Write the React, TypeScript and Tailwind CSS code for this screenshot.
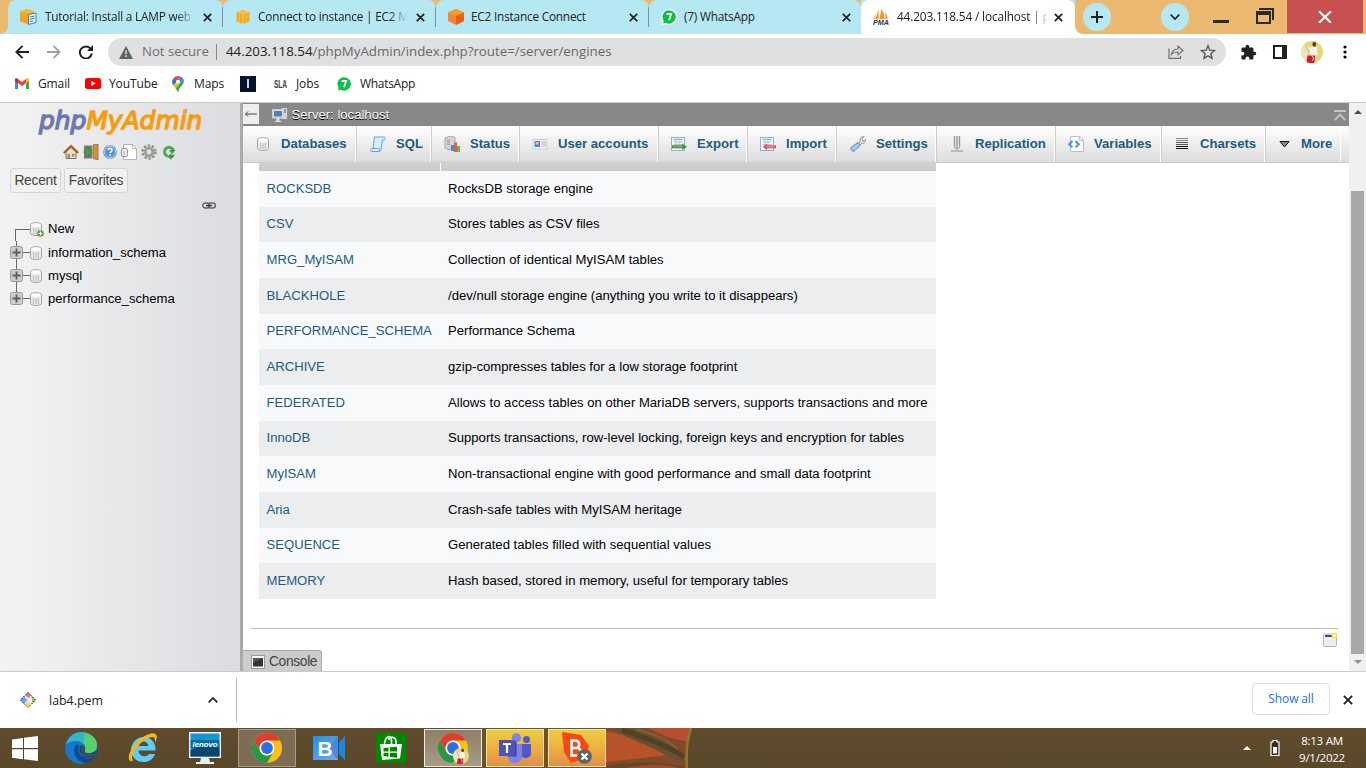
import React from "react";

const UI = "font-['Open_Sans','Noto_Sans',sans-serif]";
const ARIAL = "font-['Liberation_Sans',Arial,sans-serif]";

function Close({ className = "w-[9px] h-[9px]", color = "#202124" }: { className?: string; color?: string }) {
  return (
    <svg viewBox="0 0 9 9" className={className}>
      <path d="M.8.8l7.4 7.4M8.2.8L.8 8.2" stroke={color} strokeWidth="1.7" fill="none" />
    </svg>
  );
}

function WhatsApp({ className }: { className: string }) {
  return (
    <svg viewBox="0 0 16 16" className={className}>
      <path d="M8 0a8 8 0 1 1-3.400 15L.3 15.900l.9-4A8 8 0 0 1 8 0z" fill="#fff" />
      <path d="M8 1.200a6.700 6.700 0 1 1-3.200 12.500l-2.800.7.7-2.700A6.700 6.700 0 0 1 8 1.200z" fill="#0bc143" />
      <path d="M5.600 5h4.600L8 11.200" fill="none" stroke="#fff" strokeWidth="1.800" />
    </svg>
  );
}

const CubeYellow = () => (
  <svg viewBox="0 0 16 16" className="w-4 h-4">
    <path d="M8 1l6.500 2.300v9.200L8 15l-6.500-2.500V3.300z" fill="#f2a922" />
    <path d="M1.500 3.400L8 5.700l6.500-2.300L8 1z" fill="#f9bd42" />
    <path d="M8 5.700V15" stroke="#fbdc9b" strokeWidth=".8" />
    <path d="M4.500 2.200v12M11.500 2.200v12" stroke="#fbce74" strokeWidth=".5" />
  </svg>
);

const CubeDoc = () => (
  <svg viewBox="0 0 17 16" className="w-[17px] h-4">
    <path d="M7 0l7 2.300v10L7 15 0 12.500v-10z" fill="#f0a325" />
    <path d="M0 2.500L7 4.800l7-2.400L7 0z" fill="#f9b83c" />
    <path d="M8.500 5.500l7.500-1.500v9.500l-7.500 2z" fill="#e9f4fb" stroke="#3884b8" strokeWidth="1" />
    <path d="M10 8l4.500-1M10 10.300l4.500-1M10 12.600l3-.7" stroke="#3884b8" strokeWidth="1" />
  </svg>
);

const CubeOrange = () => (
  <svg viewBox="0 0 16 16" className="w-4 h-4">
    <path d="M8 0l8 3.500v8.500l-8 4-8-4V3.500z" fill="#f58536" />
    <path d="M0 3.500L8 7l8-3.500L8 0z" fill="#fd9a2e" />
    <path d="M8 7l8-3.500V12l-8 4z" fill="#ea5f1c" />
  </svg>
);

const PmaSails = () => (
  <svg viewBox="0 0 16 16" className="w-4 h-4">
    <path d="M5.500.5L2.500 10h3.300zM8.500 0L6.500 10h5c0-4-1-7-3-10zM12.200 3.500c1.600 2 2.300 4 2.600 6.500h-2.300zM3 5L.5 10H2z" fill="#f7941d" />
    <text x="0" y="15.500" fontSize="6.500" fontWeight="bold" fontStyle="italic" fill="#2e3260" textLength="16" lengthAdjust="spacingAndGlyphs" fontFamily="Liberation Sans">PMA</text>
  </svg>
);

function Tab({ icon, title, sep = true, width, gap = "ml-[6px]", fade }: { icon: React.ReactNode; title: string; sep?: boolean; width: string; gap?: string; fade?: boolean }) {
  return (
    <div className={`${width} relative h-[34px] flex items-center pl-3 bg-[#b5e8f3] rounded-t-[8px]`}>
      <span className="w-[17px] shrink-0">{icon}</span>
      <span className={`${gap} w-[153px] whitespace-nowrap text-[11.8px] tracking-[-0.2px] text-[#202124] ${fade ? "[mask-image:linear-gradient(to_right,#000_86%,transparent_98%)]" : ""}`}>{title}</span>
      <span className="ml-[5px] flex"><Close /></span>
      {sep && <span className="absolute right-0 top-[7px] w-px h-5 bg-[#7c9298]" />}
    </div>
  );
}

function Browser() {
  return (
    <header className={UI}>
      <div className="flex h-[34px] bg-[#ebba70]">
        <div className="w-2 h-[34px] bg-[#b5e8f3]"><div className="w-2 h-[34px] bg-[#ebba70] rounded-br-[8px]" /></div>
        <div className="flex h-[34px]">
          <Tab icon={<CubeDoc />} title="Tutorial: Install a LAMP web s" width="w-[215px]" gap="ml-[8px]" fade />
          <Tab icon={<CubeYellow />} title="Connect to instance | EC2 M" width="w-[213px]" fade />
          <Tab icon={<CubeOrange />} title="EC2 Instance Connect" width="w-[213px]" />
          <Tab icon={<WhatsApp className="w-4 h-4" />} title="(7) WhatsApp" width="w-[212px]" gap="ml-[6px]" sep={false} />
        </div>
        <div className="h-[34px] w-[214px] bg-[#b5e8f3]">
          <div className="h-[34px] bg-white rounded-t-[8px] flex items-center pl-3">
            <PmaSails />
            <span className="ml-2 w-[150px] whitespace-nowrap text-[11.8px] tracking-[-0.13px] text-[#202124] [mask-image:linear-gradient(to_right,#000_88%,transparent_102%)]">44.203.118.54 / localhost | p</span>
            <span className="ml-[7px] flex"><Close /></span>
          </div>
        </div>
        <div className="w-2 bg-white"><div className="w-2 h-[34px] bg-[#ebba70] rounded-bl-[8px]" /></div>
        <div className="flex items-center flex-1">
          <span className="w-7 h-7 rounded-full bg-[#b5e8f3] grid place-items-center">
            <svg viewBox="0 0 12 12" className="w-3 h-3"><path d="M6 0v12M0 6h12" stroke="#202124" strokeWidth="2" /></svg>
          </span>
          <span className="ml-[50px] w-7 h-7 rounded-full bg-[#b5e8f3] grid place-items-center">
            <svg viewBox="0 0 10 6" className="w-[10px] h-[6px]"><path d="M.7.7L5 5 9.3.7" stroke="#202124" strokeWidth="1.7" fill="none" /></svg>
          </span>
          <span className="ml-6 mt-[9px] w-4 h-[3px] bg-[#2a2a2a]" />
          <svg viewBox="0 0 18 16" className="ml-[27px] w-[18px] h-4 -mt-[3px]">
            <path d="M3 1h14v11" fill="none" stroke="#2a2a2a" strokeWidth="2" />
            <path d="M0 3h15v13H0zM2 7v7h11V7z" fill="#2a2a2a" fillRule="evenodd" />
          </svg>
          <span className="ml-[13px] w-[76px] h-[33px] -mt-px bg-[#c75050] grid place-items-center">
            <svg viewBox="0 0 14 12" className="w-[14px] h-3"><path d="M1 .3L13 11.700M13 .3L1 11.700" stroke="#fff" strokeWidth="2.200" /></svg>
          </span>
        </div>
      </div>
      <div className="h-[36px] bg-white flex items-center">
        <svg viewBox="0 0 14 14" className="ml-[15px] w-[14px] h-[14px]"><path d="M14 7H1.800M7.500 .9L1.400 7l6.100 6.100" stroke="#202124" strokeWidth="1.900" fill="none" /></svg>
        <svg viewBox="0 0 14 14" className="ml-[18px] w-[14px] h-[14px]"><path d="M0 7h12.200M6.500 .9L12.600 7l-6.100 6.100" stroke="#a0a0a0" strokeWidth="1.800" fill="none" /></svg>
        <svg viewBox="0 0 14 14" className="ml-[18px] w-[14px] h-[14px]"><path d="M11.800 4A6 6 0 1 0 12.800 8.500" stroke="#202124" strokeWidth="2" fill="none" /><path d="M14 0v6H8z" fill="#202124" /></svg>
        <div className="ml-[15px] w-[1118px] h-7 rounded-full bg-[#e0e0e0] flex items-center pl-[11px]">
          <svg viewBox="0 0 14 13" className="w-[14px] h-[13px]"><path d="M7 0l7 13H0z" fill="#5f6368" /><path d="M6.200 4.500h1.600V8H6.200zM6.200 9.300h1.600v1.600H6.200z" fill="#e0e0e0" /></svg>
          <span className="ml-[9px] w-[68px] text-[13.2px] text-[#6b6e73] whitespace-nowrap">Not secure</span>
          <span className="ml-[6px] w-px h-4 bg-[#8a8a8a]" />
          <span className="ml-[9px] text-[13.3px] text-[#202124] whitespace-nowrap">44.203.118.54<span className="text-[#65686c]">/phpMyAdmin/index.php?route=/server/engines</span></span>
          <svg viewBox="0 0 16 14" className="ml-auto w-4 h-[14px]"><path d="M1 3.500v9.800h11.500V11" stroke="#6b6e73" strokeWidth="1.200" fill="none" /><path d="M3.500 9.500C4 6 6 4 10 4V1l5 4.500-5 4.300V7C7 7 5 7.600 3.500 9.500z" stroke="#6b6e73" strokeWidth="1.100" fill="none" /></svg>
          <svg viewBox="0 0 16 16" className="ml-4 mr-[10px] w-4 h-4"><path d="M8 1.800l1.800 4.400 4.700.4-3.600 3.100 1.100 4.600L8 11.800l-4 2.500 1.100-4.600L1.500 6.600l4.700-.4z" stroke="#55585c" strokeWidth="1.400" fill="none" /></svg>
        </div>
        <svg viewBox="0 0 24 24" className="ml-[14px] w-[17px] h-[17px]"><path d="M20.500 11H19V7a2 2 0 0 0-2-2h-4V3.500a2.500 2.500 0 0 0-5 0V5H4a2 2 0 0 0-2 2v3.800h1.500a2.700 2.700 0 0 1 0 5.400H2V20a2 2 0 0 0 2 2h3.800v-1.500a2.700 2.700 0 0 1 5.400 0V22H17a2 2 0 0 0 2-2v-4h1.500a2.500 2.500 0 0 0 0-5z" fill="#202124" /></svg>
        <svg viewBox="0 0 14 14" className="ml-4 w-[14px] h-[14px]"><path d="M0 0h14v14H0zM2 2v10h7V2z" fill="#202124" fillRule="evenodd" /></svg>
        <Avatar className="ml-[14px] w-[22px] h-[22px]" />
        <svg viewBox="0 0 4 14" className="ml-5 w-1 h-[14px]"><circle cx="2" cy="2" r="1.600" /><circle cx="2" cy="7" r="1.600" /><circle cx="2" cy="12" r="1.600" /></svg>
      </div>
      <div className="h-8 bg-white flex items-center text-[12px] tracking-[-0.12px] text-[#202124] pl-[15px] pb-[5px]">
        <svg viewBox="0 0 14 11" className="w-[14px] h-[11px]">
          <path d="M0 1v10h3V4z" fill="#4285f4" /><path d="M11 4v7h3V1z" fill="#34a853" /><path d="M0 1.500C0 0 2 0 3 1v4.500L0 3z" fill="#c5221f" /><path d="M3 1l4 3 4-3v4L7 8 3 5z" fill="#ea4335" /><path d="M11 1c1-1 3-1 3 .5V3l-3 2.500z" fill="#fbbc04" />
        </svg>
        <span className="ml-[9px] w-[47px]">Gmail</span>
        <svg viewBox="0 0 16 11" className="w-4 h-[11px]"><rect width="16" height="11" rx="2.500" fill="#f00" /><path d="M6.300 3v5L10.700 5.500z" fill="#fff" /></svg>
        <span className="ml-2 w-[62px]">YouTube</span>
        <svg viewBox="0 0 12 16" className="ml-[1px] w-3 h-4">
          <path d="M6 0a6 6 0 0 0-5 2.700L4 5.500 8.500.6A6 6 0 0 0 6 0z" fill="#ea4335" /><path d="M8.500.6L4 5.600l3 3 4.700-5A6 6 0 0 0 8.500.6z" fill="#4285f4" /><path d="M1 2.700C-.5 5 0 7.500 1.300 9.500L5 5.500z" fill="#1a73e8" /><path d="M1.300 9.500L5 5.500l2.500 2.500-4 4.500z" fill="#fbbc04" /><path d="M11.700 3.500C13 8.500 7.500 10 6.500 15.500c-.2.700-.8.700-1 0-.4-1.300-1-2-2-3.300z" fill="#34a853" /><circle cx="6" cy="5.800" r="2" fill="#fff" />
        </svg>
        <span className="ml-[10px] w-[46px]">Maps</span>
        <span className="w-4 h-4 bg-[#05122d] grid place-items-center"><span className="w-[2px] h-[9px] bg-[#cbd0da]" /></span>
        <svg viewBox="0 0 13 14" className="ml-[18px] w-[13px] h-[14px] overflow-visible"><text x="0" y="11" fontSize="11" fontWeight="bold" fill="#444" textLength="13" lengthAdjust="spacingAndGlyphs" fontFamily="Liberation Sans">SLA</text></svg>
        <span className="ml-[9px] w-[40px]">Jobs</span>
        <WhatsApp className="w-4 h-4" />
        <span className="ml-2 tracking-[-0.3px]">WhatsApp</span>
      </div>
      <div className="h-px bg-[#c9cacc]" />
    </header>
  );
}

function Avatar({ className }: { className: string }) {
  return (
    <svg viewBox="0 0 22 22" className={className}>
      <circle cx="11" cy="11" r="11" fill="#e3d97c" />
      <path d="M3 4a11 11 0 0 0 4 17V9z" fill="#ece6c4" />
      <path d="M4.500 6l5 .5 2.500-1.500 4 1 .5 8-7 1-1-5z" fill="#f5eff2" />
      <path d="M4.500 6l4 5" stroke="#c79a7e" strokeWidth="1" />
      <ellipse cx="13.300" cy="3.200" rx="1.900" ry="2.500" fill="#5b3d30" />
      <path d="M6.500 14.500h7.500l-.5 7.200a11 11 0 0 1-8-.7z" fill="#cf1f2b" />
      <path d="M10 13l2.500 4-1 3" stroke="#f3c9c9" strokeWidth="1" fill="none" />
    </svg>
  );
}

function Cylinder({ plus, className = "w-3 h-[14px]" }: { plus?: boolean; className?: string }) {
  return (
    <svg viewBox="0 0 12 14" className={`${className} overflow-visible`}>
      <path d="M.5 2.800C.5.100 11.500.100 11.500 2.800v8.400c0 3-11 3-11 0z" fill="#ececec" stroke="#a3a3a3" />
      <ellipse cx="6" cy="3" rx="4.800" ry="1.700" fill="#fff" />
      <path d="M3.500 6v6M6 6.500V12M8.300 6v6" stroke="#c3c3c3" strokeWidth="1.300" />
      {plus && <><circle cx="10.500" cy="11.500" r="3.300" fill="#5a9a3c" /><path d="M10.500 9.500v4M8.500 11.500h4" stroke="#fff" strokeWidth="1.200" /></>}
    </svg>
  );
}

function TreeRow({ name, last }: { name: string; last?: boolean }) {
  return (
    <div className="flex h-[23px]">
      <div className="w-[13px] flex flex-col items-center">
        <span className="w-px flex-1 bg-[#666] -ml-px" />
        <svg viewBox="0 0 13 13" className="w-[13px] h-[13px] shrink-0"><rect x=".5" y=".5" width="12" height="12" rx="2" fill="#cdcdcd" stroke="#999" /><path d="M6.500 2.500v8M2.500 6.500h8" stroke="#5c5c5c" strokeWidth="1.800" /></svg>
        <span className={`w-px flex-1 -ml-px ${last ? "" : "bg-[#666]"}`} />
      </div>
      <div className="flex items-center">
        <span className="w-[7px] h-px bg-[#666]" />
        <Cylinder />
        <span className="ml-[6px] whitespace-nowrap">{name}</span>
      </div>
    </div>
  );
}

function Sidebar() {
  return (
    <aside className="w-[240px] h-[568px] bg-[linear-gradient(to_right,#f3f3f3,#dadce0)] flex flex-col text-[13.12px] text-black">
      <div className="h-[34px] mt-[1px] pl-[39px] font-['DejaVu_Sans',sans-serif] italic text-[24.9px] leading-[33px] whitespace-nowrap text-[#6c78af] [-webkit-text-stroke:1.4px_#6c78af]">
        php<span className="text-[#f89c0e] [-webkit-text-stroke:1.4px_#f89c0e]">MyAdmin</span>
      </div>
      <div className="flex items-center gap-1 ml-[63px] mt-[6px] h-4">
        <svg viewBox="0 0 16 16" className="w-4 h-4"><path d="M3 8v6.500h10V8L8 3.500z" fill="#e9dfc8" stroke="#8a7050" /><path d="M.7 9L8 2l7.300 7" stroke="#a0662a" strokeWidth="2" fill="none" /><path d="M4.500 10h2.500v4.500H4.500zM9 10h2.500v2.500H9z" fill="#868b91" /></svg>
        <svg viewBox="0 0 16 16" className="w-4 h-4"><path d="M1 1.500h8v13H1z" fill="#777" /><path d="M10 1l5-1v16l-5-1.500z" fill="#cf9348" stroke="#93591d" strokeWidth=".7" /><path d="M9 6v4H5.500v2.500L.5 8l5-4.500V6z" fill="#4ba241" stroke="#2e7d2a" strokeWidth=".5" /></svg>
        <svg viewBox="0 0 16 16" className="w-4 h-4 -ml-px"><circle cx="8" cy="8" r="6.800" fill="#5b8ed0" /><circle cx="8" cy="8" r="5.500" fill="none" stroke="#c2d7f1" strokeWidth=".9" /><path d="M6 6.300c0-2.500 4-2.500 4 0 0 1.500-2 1.500-2 3M8 10.500V12" stroke="#fff" strokeWidth="1.500" fill="none" /></svg>
        <svg viewBox="0 0 16 16" className="w-4 h-4 -ml-px"><path d="M2.500.5h9l4 4v11h-13z" fill="#fff" stroke="#b5b5b5" /><path d="M11.500.5v4h4" fill="none" stroke="#bbb" /><rect x=".5" y="4.500" width="6" height="8" rx="1.500" fill="#eee" stroke="#999" /><path d="M3 7v4" stroke="#aaa" /></svg>
        <svg viewBox="0 0 16 16" className="w-4 h-4"><circle cx="8" cy="8" r="6.500" fill="none" stroke="#8d8d8d" strokeWidth="2.400" strokeDasharray="2.300 1.784" /><circle cx="8" cy="8" r="3.900" fill="#e2e2e2" stroke="#9f9f9f" strokeWidth="3" /><circle cx="8" cy="8" r="2" fill="#e4e4e4" /></svg>
        <svg viewBox="0 0 16 16" className="w-4 h-4"><path d="M12.500 6.500A4.600 4.600 0 1 0 6.800 12.300" fill="none" stroke="#4fa64b" strokeWidth="3" /><path d="M8 6h6.500l-3.200 4z" fill="#3f9b3d" /><path d="M6.500 12.500l4-3.500v2.200c1.500 0 2.500-.5 3-1.700 0 3-1 4.300-3 4.500v2z" fill="#3f9b3d" /></svg>
      </div>
      <div className="flex gap-[3px] mt-[8px] ml-[10px] text-[13.8px] text-[#444]">
        <span className="w-[51px] h-[25px] text-center leading-[24px] border border-[#d5d5d5] rounded-[3px] bg-[#f1f1f1] tracking-[-0.25px]">Recent</span>
        <span className="w-[64px] h-[25px] text-center leading-[24px] border border-[#d5d5d5] rounded-[3px] bg-[#f1f1f1] tracking-[-0.25px]">Favorites</span>
      </div>
      <svg viewBox="0 0 14 7" className="w-[14px] h-[7px] mt-[9px] ml-[202px] shrink-0"><rect x=".7" y="1" width="7" height="5" rx="2.500" fill="none" stroke="#666" strokeWidth="1.400" /><rect x="6.300" y="1" width="7" height="5" rx="2.500" fill="none" stroke="#666" strokeWidth="1.400" /><path d="M4 3.500h6" stroke="#444" strokeWidth="1.500" /></svg>
      <div className="ml-[10px] mt-[8px]">
        <div className="flex h-6">
          <div className="w-[20px] pl-[5px] pt-3"><div className="w-[15px] h-3 border-l border-t border-[#666]" /></div>
          <div className="flex items-center"><Cylinder plus /><span className="ml-[6px]">New</span></div>
        </div>
        <TreeRow name="information_schema" />
        <TreeRow name="mysql" />
        <TreeRow name="performance_schema" last />
      </div>
    </aside>
  );
}

const Sheet = ({ imp }: { imp?: boolean }) => (
  <svg viewBox="0 0 16 16" className="w-4 h-4">
    <rect x=".5" y="1.500" width="13" height="13" fill="#f4f8ff" stroke="#8db0dd" />
    <path d="M2.500 3.500h9" stroke="#8fc78a" strokeWidth="1.500" />
    <path d="M2.500 6h9M2.500 8.500h9M2.500 11h9M5 5v8M8 5v8" stroke="#a9b7cc" strokeWidth=".8" />
    {imp ? <path d="M16 9.200v3H7v1.800L3 10.700 7 7.500v1.700z" fill="#f04a4a" /> : <path d="M1 9.300h10V7.500l5 3.300-5 3.200v-1.700H1z" fill="#3f8f3a" />}
    <path d={imp ? "M6 10.700h9" : "M2 10.800h10"} stroke={imp ? "#ff9d9d" : "#9ad08f"} strokeWidth=".8" />
  </svg>
);

const navIcons: Record<string, React.ReactNode> = {
  Databases: <span className="w-4 h-4 flex items-center justify-center"><Cylinder /></span>,
  SQL: <svg viewBox="0 0 16 16" className="w-4 h-4"><path d="M4.500 1H14c2 0 1.500 3 0 3h-1.500L11 13.500c-.3 1.500-1 2-2 2H1.500c-1.500 0-1-3 .5-3h1z" fill="#dcebfb" stroke="#6c9fd6" /><path d="M2 12.500h7c1 0 .5 3-.5 3" fill="none" stroke="#6c9fd6" /></svg>,
  Status: <svg viewBox="0 0 16 16" className="w-4 h-4"><path d="M1 2l6-2 4 1.500v10L5 14l-4-2z" fill="#d4d4d4" stroke="#999" strokeWidth=".8" /><path d="M3 4l3 .5M3 6l3 .5M3 8l3 .5" stroke="#888" strokeWidth=".8" /><path d="M7 9h3v6H7z" fill="#4c86dd" /><path d="M10 6.500h3V16h-3z" fill="#ef5a3c" /><path d="M13 10h3v6h-3z" fill="#65b84c" /></svg>,
  "User accounts": <svg viewBox="0 0 16 16" className="w-4 h-4"><rect x="1" y="3.500" width="14" height="9.500" fill="#f5f7fb" stroke="#c6cddb" /><rect x="2.500" y="5" width="5.500" height="6" fill="#5688cc" /><circle cx="5.200" cy="7.300" r="1.400" fill="#efc6a4" /><path d="M9.500 6H14M9.500 8H14M9.500 10H14" stroke="#8fa0bc" strokeWidth=".8" /></svg>,
  Export: <Sheet />,
  Import: <Sheet imp />,
  Settings: <svg viewBox="0 0 16 16" className="w-4 h-4"><path d="M8.500 7.500l1.500-2c-.5-3 2-5.500 4-5l-2 2.500.5 1.500 1.500.5 2-2c.5 2.500-2 5-4.500 4.500l-2 2z" fill="#ddd" stroke="#888" strokeWidth=".8" /><path d="M8 6.500L10.500 9l-5.500 5.500c-2.500 2-5.500-1-3.500-3.500z" fill="#a9c5f1" stroke="#5b82cd" /></svg>,
  Replication: <svg viewBox="0 0 16 16" className="w-4 h-4"><path d="M5.500 0v10.500M8 0v11M10.500 0v10.500" stroke="#999" strokeWidth="1.400" /><path d="M5 11l3 2 3-2" fill="#bbb" stroke="#999" /><path d="M2 15h12M8 12v3" stroke="#aaa" strokeWidth="1.300" /></svg>,
  Variables: <svg viewBox="0 0 16 16" className="w-4 h-4"><path d="M2.500.5h9l4 4v11h-13z" fill="#fff" stroke="#c0c0c0" /><path d="M11.500.5v4h4" fill="none" stroke="#c0c0c0" /><path d="M4.500 5L1.200 8.200l3.300 3.200M7.500 5l3.300 3.200-3.300 3.200" fill="none" stroke="#4a90e2" strokeWidth="2" /></svg>,
  Charsets: <svg viewBox="0 0 16 16" className="w-4 h-4"><path d="M2 2.500h12M2 4.500h12" stroke="#888" /><path d="M2 6.500h12M2 8.500h12" stroke="#555" /><path d="M2 10.500h12M2 12.500h12" stroke="#111" /></svg>,
  More: <svg viewBox="0 0 11 7" className="w-[11px] h-[7px] mx-[1px]"><path d="M.9.5h9.200L5.500 6z" fill="#888" stroke="#111" /></svg>,
};

const nav = [
  ["Databases", "w-[113px] pl-3"],
  ["SQL", "w-[75px] pl-[13px] border-l border-[#ccc]"],
  ["Status", "w-[88px] pl-3 border-l border-[#ccc]"],
  ["User accounts", "w-[139px] pl-3 border-l border-[#ccc]"],
  ["Export", "w-[89px] pl-3 border-l border-[#ccc]"],
  ["Import", "w-[89px] pl-3 border-l border-[#ccc]"],
  ["Settings", "w-[100px] pl-[13px] border-l border-[#ccc]"],
  ["Replication", "w-[119px] pl-3 border-l border-[#ccc]"],
  ["Variables", "w-[106px] pl-3 border-l border-[#ccc]"],
  ["Charsets", "w-[104px] pl-3 border-l border-[#ccc]"],
  ["More", "w-[76px] pl-3 border-l border-[#ccc]"],
];

const engines = [
  ["ROCKSDB", "RocksDB storage engine"],
  ["CSV", "Stores tables as CSV files"],
  ["MRG_MyISAM", "Collection of identical MyISAM tables"],
  ["BLACKHOLE", "/dev/null storage engine (anything you write to it disappears)"],
  ["PERFORMANCE_SCHEMA", "Performance Schema"],
  ["ARCHIVE", "gzip-compresses tables for a low storage footprint"],
  ["FEDERATED", "Allows to access tables on other MariaDB servers, supports transactions and more"],
  ["InnoDB", "Supports transactions, row-level locking, foreign keys and encryption for tables"],
  ["MyISAM", "Non-transactional engine with good performance and small data footprint"],
  ["Aria", "Crash-safe tables with MyISAM heritage"],
  ["SEQUENCE", "Generated tables filled with sequential values"],
  ["MEMORY", "Hash based, stored in memory, useful for temporary tables"],
];

function Main() {
  return (
    <main className="w-[1106px] h-[568px] bg-white flex flex-col text-[13.12px]">
      <div className="h-[23px] bg-[#888] flex items-start shrink-0">
        <span className="w-4 h-[20px] mt-[1px] bg-[#eee] grid place-items-center">
          <svg viewBox="0 0 14 6" className="w-[14px] h-[6px]"><path d="M13 3H1.500M4 .5L1.500 3 4 5.500" stroke="#444" fill="none" /></svg>
        </span>
        <svg viewBox="0 0 16 16" className="ml-[13px] mt-1 w-4 h-4"><path d="M9 .5h5.500l1 1v11H9z" fill="#d5d5d5" stroke="#777" strokeWidth=".6" /><path d="M11 3h3M11 5h3" stroke="#666" /><rect x=".5" y="2.500" width="11" height="8.500" fill="#ddd" stroke="#ccc" /><rect x="2" y="4" width="8" height="5.500" fill="#4f7fc6" /><path d="M4.500 11h3v3h2v1h-7v-1h2z" fill="#ddd" /></svg>
        <span className="ml-[3.500px] leading-[23px] text-white [text-shadow:0_1px_0_#000]">Server: localhost</span>
        <svg viewBox="0 0 12 11" className="ml-auto mr-[3px] mt-[7px] w-3 h-[11px]"><path d="M0 1h12M.8 10L6 4.700 11.200 10" fill="none" stroke="#c3c3c3" strokeWidth="1.900" /></svg>
      </div>
      <nav className="h-[37px] shrink-0 flex bg-[linear-gradient(#fff,#dcdcdc)] border-b border-[#ccc] font-bold text-[#235a81]">
        {nav.map(([label, cls]) => (
          <div key={label} className={`${cls} h-[36px] flex items-center shrink-0 whitespace-nowrap shadow-[inset_-1px_0_0_#fff]`}>
            {navIcons[label]}
            <span className="ml-[10px] -mt-px">{label}</span>
          </div>
        ))}
      </nav>
      <div className="ml-4 w-[677px] flex flex-col shrink-0">
        <div className="h-2 flex gap-px">
          <span className="w-[181px] bg-[linear-gradient(#d2d2d2,#c9c9c9)]" />
          <span className="flex-1 bg-[linear-gradient(#d2d2d2,#c9c9c9)]" />
        </div>
        <div className="grid h-[428px] grid-rows-12">
          {engines.map(([name, text], i) => (
            <div key={name} className={`flex items-center min-h-0 pl-[7.5px] pb-[0.4px] ${i % 2 ? "bg-[#ebedee]" : "bg-[#f8f9fb]"}`}>
              <span className="w-[181.5px] text-[#235a81]">{name}</span>
              <span className="text-black whitespace-nowrap">{text}</span>
            </div>
          ))}
        </div>
      </div>
      <div className="mt-[29px] ml-2 w-[1087px] h-px bg-[#bbb] shrink-0" />
      <svg viewBox="0 0 16 16" className="mt-[3px] ml-[1079px] w-4 h-4 shrink-0"><rect x="1.500" y="2" width="13" height="12.500" rx="1" fill="#eee" stroke="#b5b5b5" /><path d="M3 4h8" stroke="#1f5096" strokeWidth="2" /><circle cx="12.500" cy="3.500" r="2.300" fill="#fff" stroke="#f4e630" strokeWidth="1.600" /></svg>
      <div className="mt-auto w-[79px] h-[21px] shrink-0 bg-[#ccc] border-t border-r border-[#aaa] rounded-tr-[3px] flex items-center pl-2 text-[#444] text-[13.8px]">
        <svg viewBox="0 0 14 14" className="w-[14px] h-[14px] mt-[2px]"><rect x=".5" y=".5" width="13" height="13" fill="#fff" stroke="#999" /><rect x="2" y="3" width="10" height="8.500" fill="#333" /><path d="M2 3h10L2 8z" fill="#555" /></svg>
        <span className="ml-[4px] mt-[2px] tracking-[-0.35px]">Console</span>
      </div>
    </main>
  );
}

function ScrollBar() {
  return (
    <div className="w-[17px] h-[568px] bg-[#f0f0f0] flex flex-col items-center">
      <svg viewBox="0 0 8 4" className="mt-[7px] w-2 h-1"><path d="M4 0l4 4H0z" fill="#505050" /></svg>
      <div className="mt-[77px] w-[13px] h-[463px] bg-[#a8a8a8]" />
      <svg viewBox="0 0 8 4" className="mt-[6px] w-2 h-1"><path d="M0 0h8L4 4z" fill="#909090" /></svg>
    </div>
  );
}

function Downloads() {
  return (
    <div className={`h-[57px] bg-white border-t border-[#c9cacc] flex items-center ${UI}`}>
      <svg viewBox="0 0 16 16" className="ml-5 w-4 h-4"><path d="M8 0l8 8-8 8-8-8z" fill="#fff" /><path d="M8 0l3.500 3.500L8 7 4.500 3.500z" fill="#f27a7a" /><path d="M4 4l4 4-4 4-4-4z" fill="#73a4f4" /><path d="M12 4l4 4-4 4-3-3z" fill="#8acb6b" /><path d="M8 9l3.500 3.500L8 16l-3.500-3.500z" fill="#f8dc6d" /><path d="M5 4l6 6M11 6v5M9 9l3-2" stroke="#fff" strokeWidth="1.400" /><path d="M8 .5L15.500 8 8 15.500.5 8z" fill="none" stroke="#222" strokeWidth="1" strokeDasharray="1.500 1.500" /></svg>
      <span className="ml-[13px] w-[159px] mt-[2px] text-[12.4px] text-[#202124]">lab4.pem</span>
      <svg viewBox="0 0 10 6" className="w-[10px] h-[6px]"><path d="M.7 5.300L5 1l4.300 4.300" stroke="#202124" strokeWidth="1.700" fill="none" /></svg>
      <span className="ml-[18px] w-px h-[44px] bg-[#b8b8b8]" />
      <span className="ml-auto w-[78px] h-8 -mt-[2px] border border-[#dadce0] rounded-[4px] text-center leading-[30px] text-[12px] font-medium tracking-[-0.12px] text-[#1a73e8]">Show all</span>
      <span className="ml-[13px] mr-[13px] flex -mt-px"><Close className="w-[10px] h-[10px]" /></span>
    </div>
  );
}

const Chrome = ({ className = "w-[30px] h-[30px]" }: { className?: string }) => (
  <svg viewBox="0 0 30 30" className={className}>
    <circle cx="15" cy="15" r="15" fill="#fbc116" />
    <path d="M2 7.500A15 15 0 0 1 28 7.500H15a7.500 7.500 0 0 0-6.500 11.200z" fill="#e33b2e" />
    <path d="M2 7.500A15 15 0 0 0 15 30l6.500-11.300a7.500 7.500 0 0 1-13 0z" fill="#279847" />
    <circle cx="15" cy="15" r="7.500" fill="#fff" /><circle cx="15" cy="15" r="5.900" fill="#2d6fe0" />
  </svg>
);

function Task({ children, cls = "" }: { children: React.ReactNode; cls?: string }) {
  return (
    <div className="w-[62px] h-10 flex justify-center items-center shrink-0">
      <div className={`w-[58px] h-[38px] grid place-items-center ${cls}`}>{children}</div>
    </div>
  );
}

function Taskbar() {
  return (
    <footer className={`relative h-10 bg-[linear-gradient(#604b2c,#5a482b)] flex items-center text-white ${UI}`}>
      <svg viewBox="0 0 340 40" className="absolute left-[420px] top-0 w-[340px] h-10" fill="none">
        <path d="M60 0h125v40H60z" fill="#6c5328" />
        <path d="M186 0h86c-4 14-5 27-4 40h-82z" fill="#84492b" />
        <path d="M186 3c30 6 44 14 62 24l-62 7z" fill="#b9532c" /><path d="M228 0h43l-3 14-20-5z" fill="#b5502e" />
        <path d="M190 0c14 9 34 15 56 27 6 3 14 6 20 7C258 20 240 6 222 0z" fill="#67502f" />
        <path d="M202 2c22 7 45 15 62 27" stroke="#42381f" strokeWidth="5" opacity=".6" />
        <path d="M216 1c18 5 30 10 42 20" stroke="#8c5b38" strokeWidth="2" />
        <path d="M187 38c30-6 58-4 82 2h-82z" fill="#614a2b" /><path d="M205 40c20-4 40-4 54 0z" fill="#a44c2b" />
        <path d="M271 0c-5 14-5 27-4 40" stroke="#8c7a2d" strokeWidth="2.500" />
      </svg>
      <div className="relative w-[50px] flex justify-center">
        <svg viewBox="0 0 26 25" className="w-[26px] h-[25px]"><path d="M0 3.500L11 2v10H0zM12 1.800L26 0v12H12zM0 13.200h11v10L0 21.800zM12 13.200h14V25l-14-1.700z" fill="#fff" /></svg>
      </div>
      <div className="relative flex">
        <Task>
          <svg viewBox="0 0 32 32" className="w-8 h-8"><circle cx="16" cy="16" r="16" fill="#1578cb" /><path d="M1 13C3 4 10 0 16 0c9 0 16 6 16 13 0 6-4 8-8 8-4 0-5-2-4-4 1-5-4-8-9-8-4 0-8 1-10 4z" fill="#2fb7c8" /><path d="M20 .6C28 3 32 8 32 13c0 6-4 8-8 8-4 0-5-2-4-4 1-2 0-5-2-6z" fill="#55cf72" /><path d="M10 14c-3 9 3 17 12 17 4-1 7-4 9-8-4 3-8 3-11 2-5-1-8-6-6-11-1-2-3-1-4 0z" fill="#114a8b" /><path d="M18.500 13.500c2 2 2 3 1.500 4-1 3 2 4 5 4l7-3v5.500l-2 0c-4 1.500-7 1.500-10 .5-5-2-7-7-4.500-11z" fill="#114a8b" /><path d="M17.500 14c2.500 1 2.500 3 2 4.500s1 3 4 3.500h8.500V23l-3 .8c-5 1-9.500 0-11.500-3-1.500-2-1.500-5 0-6.800z" fill="#5c4a2b" /></svg>
        </Task>
        <Task>
          <svg viewBox="0 0 32 32" className="w-8 h-8"><path d="M28.500 18.500H11.500c0 6 8 7.500 10.500 3.500h6c-2 5.500-6 8-11.500 8C8.500 30 4 24 4 18S9 5 16.500 5s12.500 5.500 12 13.500zM21.500 14c-1-6-9-6-10 0z" fill="#5fcdf5" fillRule="evenodd" /><path d="M4.500 29.500C-4 27 9 5 24 1.500c6.500-1 7 4 4 9 .5-5-1-6.500-5-5C13 8.500 1.500 24 6 28z" fill="#f4b91d" /></svg>
        </Task>
        <Task>
          <svg viewBox="0 0 32 32" className="w-8 h-8"><path d="M0 0h32v26H0z" fill="#e9f2f7" /><path d="M1.500 1.500h29v23h-29z" fill="#1296d4" /><path d="M1.500 18c10-5 20-6 29-2v8.500h-29z" fill="#08466f" /><path d="M1.500 8h29v8h-29z" fill="#065a91" opacity=".7" /><text x="3.500" y="14.500" fontSize="8" fontWeight="bold" fontStyle="italic" fill="#fff" textLength="25" lengthAdjust="spacingAndGlyphs" fontFamily="Liberation Sans">lenovo</text><path d="M12 26h8l1 4h4v2H7v-2h4z" fill="#e8eef1" /></svg>
        </Task>
        <Task cls="bg-[#7c6d54] border border-[#a89d8b]"><Chrome /></Task>
        <Task>
          <svg viewBox="0 0 32 24" className="w-8 h-6"><defs><linearGradient id="bj" x2="1" y2="1"><stop stopColor="#1a93e6" /><stop offset="1" stopColor="#7fa5e6" /></linearGradient></defs><path d="M0 0h25v24H0z" fill="url(#bj)" /><path d="M32 0v24l-6-6V6z" fill="#1788e4" /><path d="M25 0v24L15 12z" fill="#3d82d8" opacity=".7" /><text x="4.500" y="19.500" fontSize="21" fontWeight="bold" fill="#fff" fontFamily="Liberation Sans">B</text></svg>
        </Task>
        <Task>
          <svg viewBox="0 0 30 30" className="w-[30px] h-[30px]"><path d="M0 0h30v30H0z" fill="#008a00" /><path d="M4 11h22l-2 14.500L6 27z" fill="#fff" /><path d="M8.500 11c1-9 7-9 7-4v4M12.500 7c2-5 8.500-3 7.500 4" stroke="#fff" strokeWidth="1.600" fill="none" /><path d="M7.500 15l5-.5v4H7.500zM14 14.300l7-.6v4.800h-7zM7.500 19.700h5v4l-5-.6zM14 19.700h7v5l-7-.8z" fill="#008a00" /></svg>
        </Task>
        <Task cls="bg-[linear-gradient(#8d8068,#a89b84)] border border-[#f1ead8]">
          <div className="relative"><Chrome /><Avatar className="absolute w-4 h-4 left-[15px] top-[15px]" /></div>
        </Task>
        <Task cls="bg-[linear-gradient(#ebcd45,#edb03f,#e08e4b)] border border-[#f8e3ae]">
          <svg viewBox="0 0 32 31" className="w-8 h-[31px]"><circle cx="17.500" cy="4.800" r="4.600" fill="#7b83eb" /><circle cx="27.500" cy="6.500" r="3.500" fill="#5059c9" /><path d="M21 11h11v9c0 5-6 7-10 3z" fill="#5059c9" /><path d="M9 11h14v12c0 9-14 10-14 0z" fill="#7b83eb" /><path d="M9 8.500h8.500v15H9z" fill="#3b3f93" /><path d="M0 7h16v16H0z" fill="#4b53bc" /><path d="M4 11h8M8 11v9" stroke="#fff" strokeWidth="2.200" /></svg>
        </Task>
        <Task cls="bg-[linear-gradient(#ebcd45,#edb03f,#e08e4b)] border border-[#f8e3ae]">
          <svg viewBox="0 0 32 32" className="w-8 h-8"><path d="M1 0l19 3 8 11-3 12-15 5-7-11z" fill="#fc4710" /><path d="M10.500 8.500v15h4.500c6 0 6-7.500 1-7.500h-5.500H15c4.500 0 4.500-7.500-1-7.500z" fill="none" stroke="#fff" strokeWidth="2.600" /><circle cx="23.500" cy="24.500" r="7.300" fill="#5d6466" /><path d="M20.500 21.500l6 6M26.500 21.500l-6 6" stroke="#fff" strokeWidth="2.300" /></svg>
        </Task>
      </div>
      <div className="relative ml-auto flex items-center">
        <svg viewBox="0 0 8 4" className="w-2 h-1"><path d="M4 0l4 4H0z" fill="#fff" /></svg>
        <svg viewBox="0 0 10 16" className="ml-[19px] w-[10px] h-4"><path d="M3 .5h4V2h2v13.500H1V2h2z" fill="#3b2d1a" stroke="#fff" strokeWidth="1.200" /><path d="M3 7h4v6.500H3z" fill="#fff" /></svg>
        <div className="ml-[13px] w-[58px] mr-[15px] text-center text-[11.6px] leading-[17px] tracking-[-0.3px] whitespace-nowrap pt-[1px]"><div>8:13 AM</div><div>9/1/2022</div></div>
      </div>
    </footer>
  );
}

export default function App() {
  return (
    <div className={`w-[1366px] h-[768px] overflow-hidden bg-white ${ARIAL}`}>
      <Browser />
      <div className="flex h-[568px]">
        <Sidebar />
        <div className="w-[3px] bg-[#aaa]" />
        <Main />
        <ScrollBar />
      </div>
      <Downloads />
      <Taskbar />
    </div>
  );
}
